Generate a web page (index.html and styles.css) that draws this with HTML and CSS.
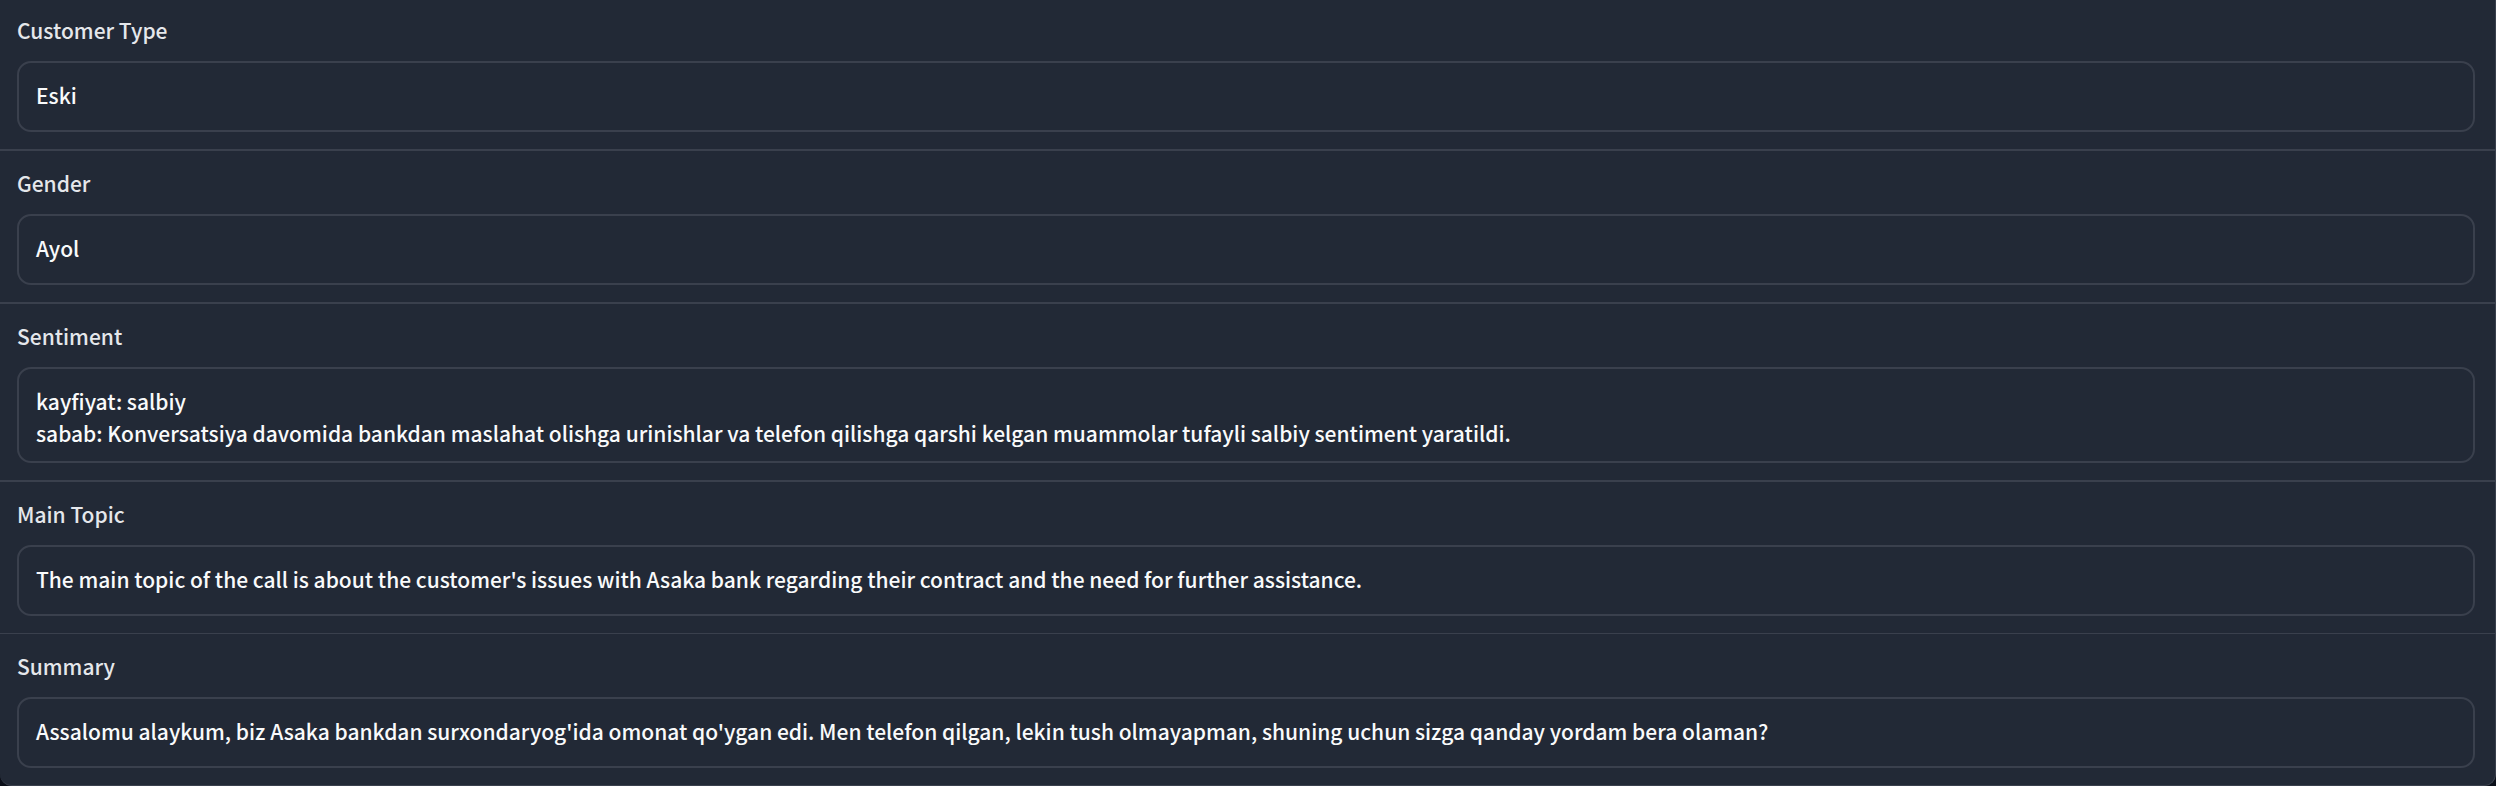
FILE: index.html
```html
<!DOCTYPE html>
<html lang="uz">
<head>
<meta charset="utf-8">
<title>Call analysis</title>
<link rel="stylesheet" href="styles.css">
</head>
<body>
<main class="form">
  <div class="block">
    <label class="block-label" for="customer-type">Customer Type</label>
    <textarea class="box" id="customer-type" rows="1" spellcheck="false">Eski</textarea>
  </div>
  <div class="block">
    <label class="block-label" for="gender">Gender</label>
    <textarea class="box" id="gender" rows="1" spellcheck="false">Ayol</textarea>
  </div>
  <div class="block">
    <label class="block-label" for="sentiment">Sentiment</label>
    <textarea class="box box-double" id="sentiment" rows="2" spellcheck="false">kayfiyat: salbiy
sabab: Konversatsiya davomida bankdan maslahat olishga urinishlar va telefon qilishga qarshi kelgan muammolar tufayli salbiy sentiment yaratildi.</textarea>
  </div>
  <div class="block">
    <label class="block-label" for="main-topic">Main Topic</label>
    <textarea class="box" id="main-topic" rows="1" spellcheck="false">The main topic of the call is about the customer's issues with Asaka bank regarding their contract and the need for further assistance.</textarea>
  </div>
  <div class="block block-last">
    <label class="block-label" for="summary">Summary</label>
    <textarea class="box" id="summary" rows="1" spellcheck="false">Assalomu alaykum, biz Asaka bankdan surxondaryog'ida omonat qo'ygan edi. Men telefon qilgan, lekin tush olmayapman, shuning uchun sizga qanday yordam bera olaman?</textarea>
  </div>
</main>
</body>
</html>
```

FILE: styles.css
```css
* {
  box-sizing: border-box;
}

body {
  margin: 0;
  background: #0b0f19;
  font-family: "Noto Sans CJK SC", "Noto Sans", sans-serif;
  font-size: 21px;
  font-weight: 500;
  line-height: 32px;
}

.form {
  display: flex;
  flex-direction: column;
  overflow: hidden;
  background: #222936;
  border: solid #3a404d;
  border-width: 0 1px 1px 0;
  border-radius: 0 0 12px 12px;
}

.block {
  display: flex;
  flex-direction: column;
  gap: 15px;
  padding: 16px 20px 17px 17px;
  border-top: 2px solid #3a404d;
}

.block:first-child {
  padding-top: 14px;
  border-top: 0;
}

.block-last {
  border-top-width: 1px;
}

.block-label {
  color: #e5e7eb;
}

.box {
  display: block;
  width: 100%;
  height: 71px;
  margin: 0;
  padding: 16px 17px;
  overflow: hidden;
  resize: none;
  color: #f9fafb;
  font: inherit;
  background: #222936;
  border: 2px solid #3a404d;
  border-radius: 14px;
  outline: 0;
}

.box-double {
  height: 96px;
}
```
